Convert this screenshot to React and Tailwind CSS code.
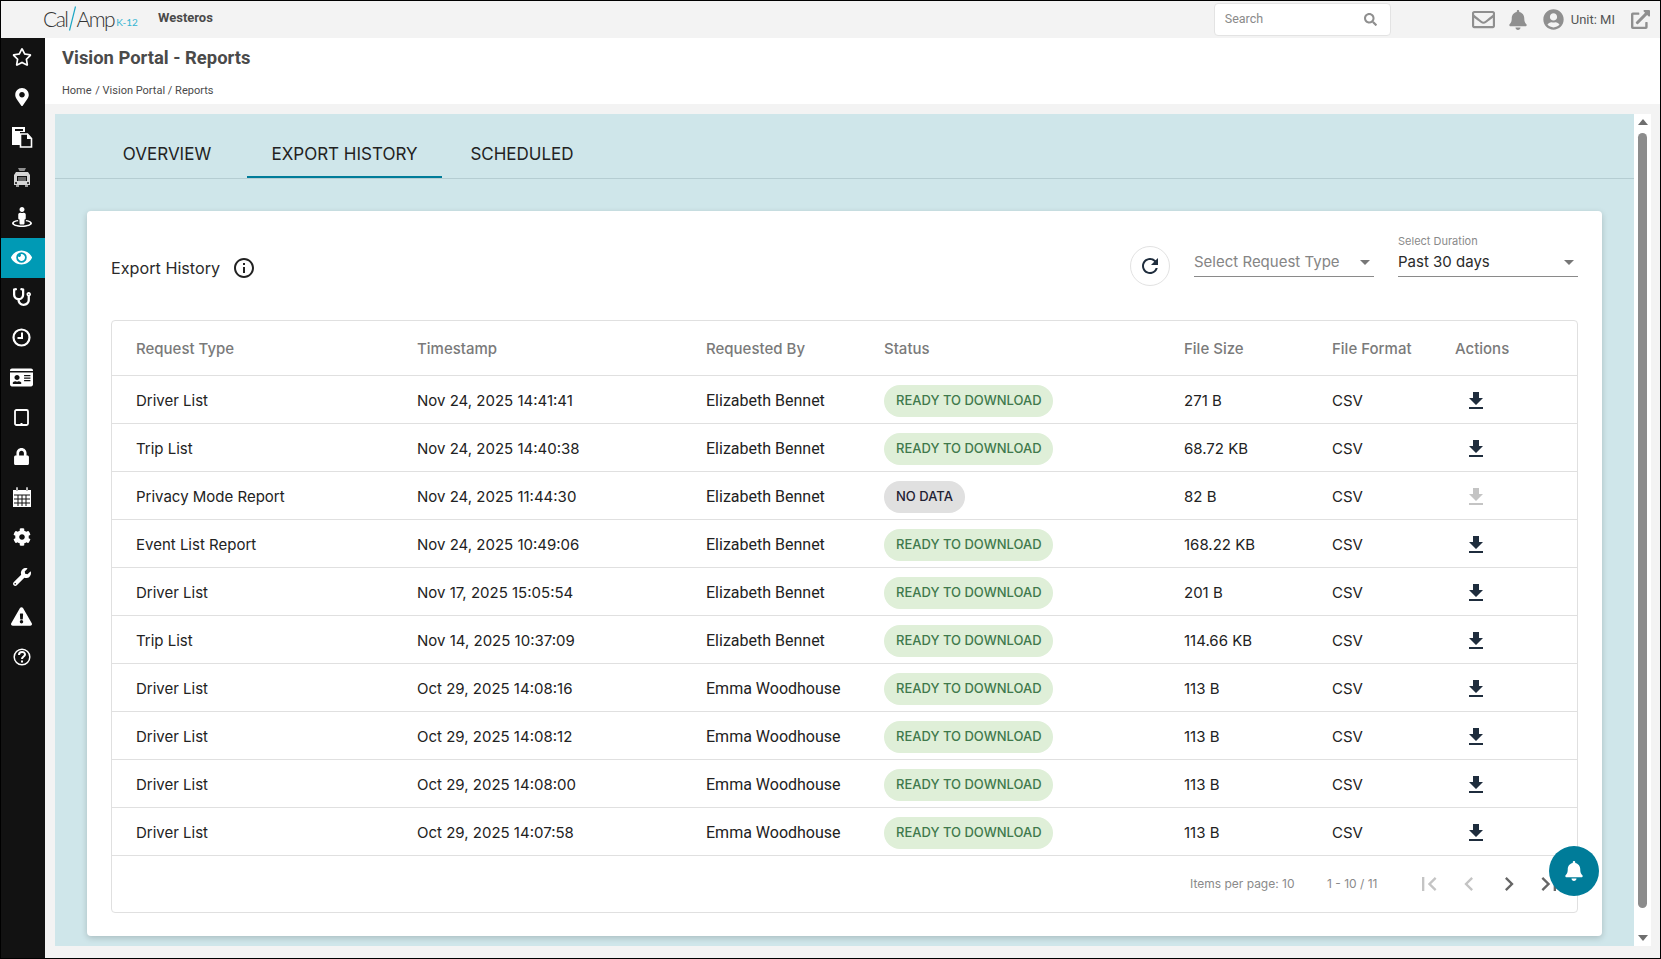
import React from 'react'
import { FaRegStar, FaMapMarkerAlt, FaLock, FaCog, FaWrench, FaExclamationTriangle, FaEye, FaStethoscope, FaBell, FaRegEnvelope, FaExternalLinkAlt, FaUserCircle, FaSearch, FaStreetView, FaIdCard } from 'react-icons/fa'
import { MdRefresh, MdInfoOutline, MdFirstPage, MdLastPage, MdChevronLeft, MdChevronRight, MdFileDownload, MdArrowDropDown } from 'react-icons/md'

const CopyIcon = () => (
  <svg width="22" height="22" viewBox="0 0 22 22">
    <path d="M1 1h13v5h-5v13H1z" fill="#fff" />
    <path d="M4 4h8" stroke="#121212" strokeWidth="2" />
    <path d="M9.500 8h7l4 4.500v8.500h-11z" fill="#121212" stroke="#fff" strokeWidth="1.600" />
    <path d="M16 8v5h4.500" fill="#fff" />
  </svg>
)

const BusIcon = () => (
  <svg width="20" height="20" viewBox="0 0 20 20" className="mt-[2px]">
    <path d="M6 0h8l-1.500 3h-5z" fill="#8f8f8f" />
    <path d="M4 4h12l2 3v10H2V7z" fill="#d6d6d6" />
    <path d="M5 8h10v5H5z" fill="#121212" />
    <path d="M6 10h8M6 12h8" stroke="#bdbdbd" strokeWidth="1" />
    <path d="M3 15h2M15 15h2" stroke="#121212" strokeWidth="1.500" />
    <path d="M4 17h3v2H4zM13 17h3v2h-3z" fill="#9a9a9a" />
  </svg>
)

const ClockIcon = () => (
  <svg width="19" height="19" viewBox="0 0 19 19" fill="none" stroke="#fff">
    <circle cx="9.500" cy="9.500" r="8" strokeWidth="2.200" />
    <path d="M10 4.500v5.500H5.500" strokeWidth="2" />
  </svg>
)

const TabletIcon = () => (
  <svg width="15" height="17" viewBox="0 0 15 17" fill="none">
    <rect x="1" y="1" width="13" height="15" rx="1.500" stroke="#fff" strokeWidth="1.800" />
    <path d="M6.500 14.500h2" stroke="#fff" strokeWidth="1" />
  </svg>
)

const CalendarIcon = () => (
  <svg width="20" height="21" viewBox="0 0 20 21" fill="none">
    <rect x="1" y="3" width="18" height="17" fill="#fff" />
    <path d="M5 0.500v4M15 0.500v4" stroke="#fff" strokeWidth="2" />
    <path d="M5 1v3M15 1v3" stroke="#121212" strokeWidth="0.600" />
    <path d="M2 8h16M2 12h16M2 16h16M6 8v11M10 8v11M14 8v11" stroke="#121212" strokeWidth="1" />
  </svg>
)

const HelpIcon = () => (
  <svg width="18" height="18" viewBox="0 0 18 18" fill="none">
    <circle cx="9" cy="9" r="7.800" stroke="#fff" strokeWidth="1.500" />
    <path d="M6 7c0-4 6-4 6-0.500 0 2-3 2-3 4.500" stroke="#fff" strokeWidth="2" />
    <rect x="8" y="12.500" width="2" height="2" fill="#fff" />
  </svg>
)

const NAV = [
  <FaRegStar size={20} />,
  <FaMapMarkerAlt size={18} />,
  <CopyIcon />,
  <BusIcon />,
  <FaStreetView size={20} />,
  <FaEye size={21} />,
  <FaStethoscope size={18} />,
  <ClockIcon />,
  <FaIdCard size={23} />,
  <TabletIcon />,
  <FaLock size={17} className="-mt-[2px]" />,
  <CalendarIcon />,
  <FaCog size={18} />,
  <FaWrench size={18} />,
  <FaExclamationTriangle size={21} className="-mt-[2px]" />,
  <HelpIcon />,
]

const ROWS = [
  ['Driver List', 'Nov 24, 2025 14:41:41', 'Elizabeth Bennet', 'ready', '271 B'],
  ['Trip List', 'Nov 24, 2025 14:40:38', 'Elizabeth Bennet', 'ready', '68.72 KB'],
  ['Privacy Mode Report', 'Nov 24, 2025 11:44:30', 'Elizabeth Bennet', 'none', '82 B'],
  ['Event List Report', 'Nov 24, 2025 10:49:06', 'Elizabeth Bennet', 'ready', '168.22 KB'],
  ['Driver List', 'Nov 17, 2025 15:05:54', 'Elizabeth Bennet', 'ready', '201 B'],
  ['Trip List', 'Nov 14, 2025 10:37:09', 'Elizabeth Bennet', 'ready', '114.66 KB'],
  ['Driver List', 'Oct 29, 2025 14:08:16', 'Emma Woodhouse', 'ready', '113 B'],
  ['Driver List', 'Oct 29, 2025 14:08:12', 'Emma Woodhouse', 'ready', '113 B'],
  ['Driver List', 'Oct 29, 2025 14:08:00', 'Emma Woodhouse', 'ready', '113 B'],
  ['Driver List', 'Oct 29, 2025 14:07:58', 'Emma Woodhouse', 'ready', '113 B'],
]

const COLS = 'grid grid-cols-[281px_289px_178px_300px_148px_123px_1fr] items-center pl-6'

function Header() {
  return (
    <div className="h-[37px] flex items-center bg-[#f3f3f3] font-['Roboto',sans-serif] shrink-0">
      <div className="ml-[42px] w-[115px] flex items-center text-[#333] font-['Lato',sans-serif] font-light text-[21px] tracking-[-1.5px] leading-none -mt-[3px]">
        <span>Cal</span>
        <svg width="9" height="25" viewBox="0 0 9 25"><path d="M7.500 0.500 L1.500 24.500" stroke="#1aa6c4" strokeWidth="1.200" /></svg>
        <span>Amp</span>
        <span className="text-[10px] text-[#35b5d2] mt-2 ml-[2px] tracking-normal font-normal">K-12</span>
      </div>
      <div className="text-[13px] font-bold text-[#4a4a4a] -mt-[4px]">Westeros</div>
      <div className="ml-auto mr-[81px] w-[177px] h-[33px] bg-white border border-[#e3e3e3] rounded flex items-center justify-between pl-[10px] pr-[13px]">
        <span className="text-[12.5px] text-[#8a8a8a]">Search</span>
        <FaSearch size={13} className="text-[#8f8f8f]" />
      </div>
      <FaRegEnvelope size={23} className="text-[#8f8f8f] mr-[13px]" />
      <FaBell size={20} className="text-[#8f8f8f] mr-[15px]" />
      <FaUserCircle size={21} className="text-[#8f8f8f] mr-[7px]" />
      <span className="text-[13px] text-[#555] mr-[16px]">Unit: MI</span>
      <FaExternalLinkAlt size={19} className="text-[#8f8f8f] mr-[10px]" />
    </div>
  )
}

function Sidebar() {
  return (
    <div className="w-[44px] shrink-0 bg-[#121212] flex flex-col">
      {NAV.map((icon, i) => (
        <div key={i} className={`h-10 flex items-center justify-center pr-[3px] pb-[2px] text-white ${i === 5 ? 'bg-[#009ab5]' : ''}`}>
          {icon}
        </div>
      ))}
    </div>
  )
}

function Chip({ status }) {
  if (status === 'none') {
    return <span className="inline-flex items-center h-8 pt-[1px] px-3 rounded-full bg-[#e0e0e0] text-[#1f2233] text-[13px] font-medium">NO DATA</span>
  }
  return <span className="inline-flex items-center h-8 pt-[1px] pl-3 pr-[11px] rounded-full bg-[#dfefd8] text-[#40794c] text-[13px] font-medium">READY TO DOWNLOAD</span>
}

function Select({ label, value, placeholder }) {
  return (
    <div className="w-[180px] h-[42px] flex flex-col justify-end border-b border-[#8a8a8a] pb-1 relative">
      {label && <div className="absolute top-0 left-0 text-[11px] leading-3 text-[#8a8a8a]">{label}</div>}
      <div className="flex items-center justify-between">
        <span className={`text-[15px] leading-5 ${placeholder ? 'text-[#858585]' : 'text-[#2a2a2a]'}`}>{value}</span>
        <MdArrowDropDown size={24} className="text-[#777] -my-1 -mr-[3px]" />
      </div>
    </div>
  )
}

function ExportCard() {
  return (
    <div className="mx-8 mt-[32px] h-[725px] bg-white rounded shadow-[0_2px_6px_rgba(0,0,0,0.18)] px-6 pt-[24px] font-['Inter',sans-serif] relative">
      <div className="h-[60px] flex items-start">
        <div className="h-[60px] pt-[6px] flex items-center">
          <span className="text-[16.2px] text-[#2a2a2a] mr-[12px]">Export History</span>
          <MdInfoOutline size={24} className="text-[#222]" />
        </div>
        <div className="ml-auto flex items-start">
          <div className="w-10 h-10 mt-[11px] rounded-full border border-[#e2e2e2] flex items-center justify-center mr-6">
            <MdRefresh size={24} className="text-[#1f2d3d]" />
          </div>
          <Select value="Select Request Type" placeholder />
          <div className="w-6" />
          <Select label="Select Duration" value="Past 30 days" />
        </div>
      </div>
      <div className="mt-[25px] h-[593px] border border-[#e0e0e0] rounded flex flex-col">
        <div className={`${COLS} h-[55px] pt-[3px] border-b border-[#e0e0e0] text-[15px] font-medium text-[#7a7a7a] shrink-0`}>
          <div>Request Type</div>
          <div>Timestamp</div>
          <div>Requested By</div>
          <div>Status</div>
          <div>File Size</div>
          <div>File Format</div>
          <div>Actions</div>
        </div>
        {ROWS.map((r, i) => (
          <div key={i} className={`${COLS} h-12 pt-[2px] border-b border-[#e0e0e0] text-[15px] text-[#222] shrink-0`}>
            <div className="pt-[1px]">{r[0]}</div>
            <div className="pt-[1px]">{r[1]}</div>
            <div className="font-['Roboto',sans-serif] text-base">{r[2]}</div>
            <div><Chip status={r[3]} /></div>
            <div className="pt-[1px]">{r[4]}</div>
            <div className="pt-[1px]">CSV</div>
            <div className="pl-[9px]">
              <MdFileDownload size={24} className={r[3] === 'none' ? 'text-[#c4c4c4]' : 'text-[#1f2d3d]'} />
            </div>
          </div>
        ))}
        <div className="flex-1 flex items-center text-xs text-[#8a8a8a] pl-[1078px]">
          <span className="w-[137px]">Items per page: 10</span>
          <span className="w-[88px]">1 - 10 / 11</span>
          <MdFirstPage size={28} className="text-[#c4c4c4] mr-[12px]" />
          <MdChevronLeft size={28} className="text-[#c4c4c4] mr-[12px]" />
          <MdChevronRight size={28} className="text-[#666] mr-[12px]" />
          <MdLastPage size={28} className="text-[#666]" />
        </div>
      </div>
      <div className="absolute left-[1462px] top-[635px] w-[50px] h-[50px] rounded-full bg-[#007c99] flex items-center justify-center">
        <FaBell size={20} className="text-white" />
      </div>
    </div>
  )
}

export default function App() {
  return (
    <div className="w-[1661px] h-[959px] overflow-hidden flex flex-col bg-[#f3f3f3] border border-black">
      <Header />
      <div className="flex-1 flex min-h-0">
        <Sidebar />
        <div className="flex-1 flex flex-col min-w-0">
          <div className="h-[66px] bg-white pl-[17px] pt-[5px] shrink-0 font-['Roboto',sans-serif]">
            <div className="text-[18.4px] font-bold leading-[30px] text-[#4a4a4a]">Vision Portal - Reports</div>
            <div className="text-[11px] leading-4 text-[#4a4a4a] mt-[10px]">Home<span className="ml-[1px]"> / Vision Portal / Reports</span></div>
          </div>
          <div className="flex-1 flex pt-[10px] pl-[10px] pb-[12px] min-h-0">
            <div className="w-[1579px] bg-[#cfe6ea] font-['Inter',sans-serif]">
              <div className="h-[65px] pl-8 flex border-b border-[#b5cdd2] text-[17px] text-[#222]">
                <div className="w-40 flex items-center justify-center pt-5 border-b-2 border-transparent">OVERVIEW</div>
                <div className="w-[195px] flex items-center justify-center pt-5 border-b-2 border-[#007c99]">EXPORT HISTORY</div>
                <div className="w-40 flex items-center justify-center pt-5 border-b-2 border-transparent">SCHEDULED</div>
              </div>
              <ExportCard />
            </div>
            <div className="w-[17px] bg-white flex flex-col items-center">
              <div className="h-[16px] flex items-center justify-center"><div className="w-0 h-0 border-x-[5px] border-x-transparent border-b-[6px] border-b-[#6e6e6e]" /></div>
              <div className="w-[9px] mt-[3px] h-[775px] rounded-full bg-[#8c8c8c]" />
              <div className="mt-auto h-[16px] flex items-center justify-center"><div className="w-0 h-0 border-x-[5px] border-x-transparent border-t-[6px] border-t-[#6e6e6e]" /></div>
            </div>
          </div>
        </div>
      </div>
    </div>
  )
}
